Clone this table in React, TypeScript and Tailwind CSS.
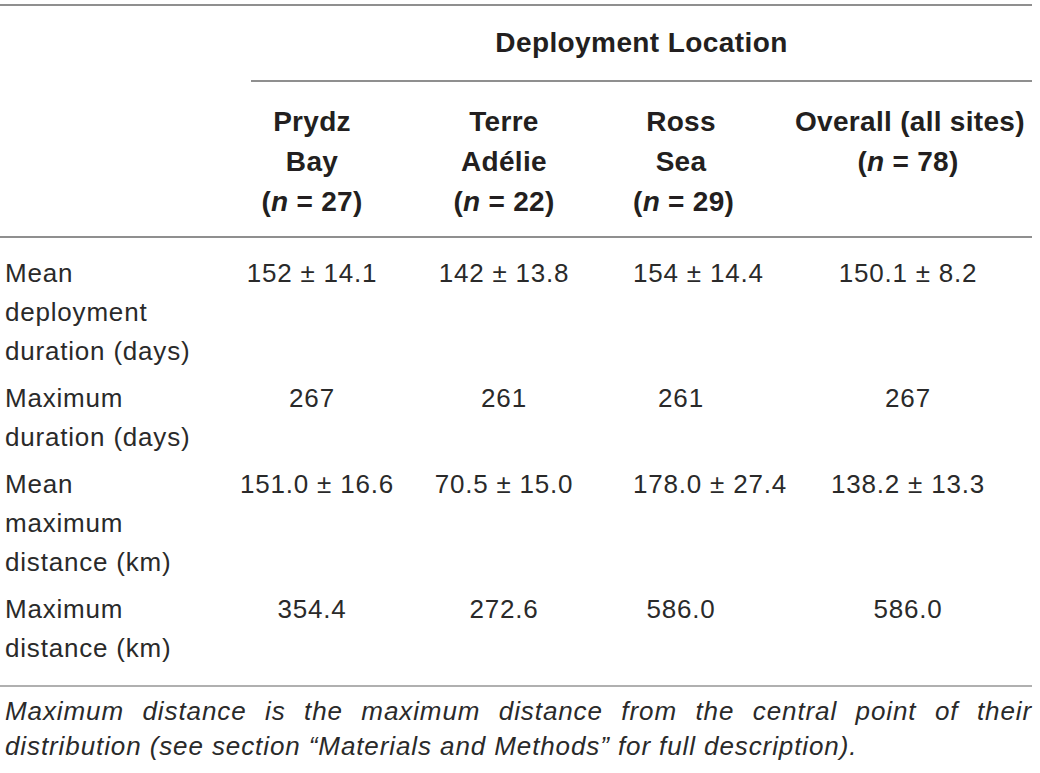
import React from 'react';

type Row = { label: React.ReactNode; values: string[] };

const rows: Row[] = [
  {
    label: (
      <>
        Mean
        <br />
        deployment
        <br />
        duration (days)
      </>
    ),
    values: ['152 ± 14.1', '142 ± 13.8', '154 ± 14.4', '150.1 ± 8.2'],
  },
  {
    label: (
      <>
        Maximum
        <br />
        duration (days)
      </>
    ),
    values: ['267', '261', '261', '267'],
  },
  {
    label: (
      <>
        Mean
        <br />
        maximum
        <br />
        distance (km)
      </>
    ),
    values: ['151.0 ± 16.6', '70.5 ± 15.0', '178.0 ± 27.4', '138.2 ± 13.3'],
  },
  {
    label: (
      <>
        Maximum
        <br />
        distance (km)
      </>
    ),
    values: ['354.4', '272.6', '586.0', '586.0'],
  },
];

// padding per value column so the text centres sit where the reference has them
const colPad = ['px-0', 'px-0', 'px-[9px]', 'pl-[57px] pr-[11px]'];

const grid = 'grid grid-cols-[240px_144px_240px_114px_294px]';

function Rule({ className = '' }: { className?: string }) {
  return <div className={`h-[2px] bg-[#8f8f8f] ${className}`} />;
}

export default function App() {
  return (
    <div className="h-[773px] w-[1040px] overflow-hidden bg-white pt-[4px] font-['Liberation_Sans',Arial,sans-serif] text-[#231f20]">
      <div className="w-[1032px]">
        <Rule />

        {/* spanning header */}
        <div className={grid}>
          <div />
          <div className="col-span-4 ml-[11px]">
            <div className="pt-[15px] pb-[15px] text-center text-[28px] font-bold leading-[44px] tracking-[0.4px]">
              Deployment Location
            </div>
            <Rule />
          </div>
        </div>

        {/* column headers */}
        <div className={`${grid} pt-[20px] pb-[14px] text-[28px] font-bold leading-[40px] tracking-[0.3px]`}>
          <div />
          <div className="text-center whitespace-nowrap">
            Prydz
            <br />
            Bay
            <br />(<i>n</i> = 27)
          </div>
          <div className="text-center whitespace-nowrap">
            Terre
            <br />
            Adélie
            <br />(<i>n</i> = 22)
          </div>
          <div className="px-[9px] text-center whitespace-nowrap">
            Ross
            <br />
            Sea
            <br />(<i>n</i> = 29)
          </div>
          <div className="pl-[57px] pr-[11px] text-center whitespace-nowrap">
            Overall (all sites)
            <br />(<i>n</i> = 78)
          </div>
        </div>
        <Rule />

        {/* body */}
        <div className="pt-[12px] pb-[13px] text-[26px] leading-[39px] tracking-[0.8px] text-[#2a2a2a]">
          {rows.map((r, i) => (
            <div key={i} className={`${grid} py-[4px]`}>
              <div className="pl-[5px] whitespace-nowrap">{r.label}</div>
              {r.values.map((v, j) => (
                <div key={j} className={`${colPad[j]} text-center whitespace-nowrap`}>
                  {v}
                </div>
              ))}
            </div>
          ))}
        </div>
        <Rule className="bg-[#b0b0b0]" />

        <p className="pt-[7px] pl-[5px] text-justify text-[26px] leading-[35px] italic tracking-[0.9px] text-[#2a2a2a] [text-align-last:left]">
          Maximum distance is the maximum distance from the central point of their distribution (see section
          “Materials and Methods” for full description).
        </p>
      </div>
    </div>
  );
}
